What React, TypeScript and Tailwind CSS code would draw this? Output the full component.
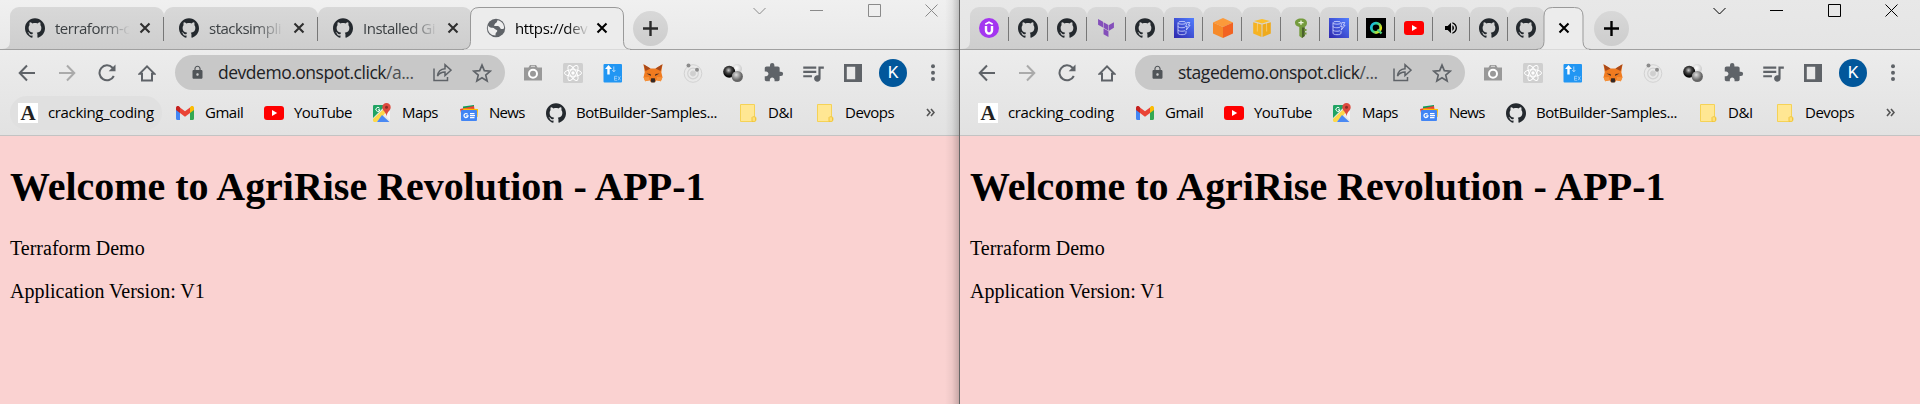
import type { ReactNode } from "react";
import { SiGithub, SiTerraform } from "react-icons/si";
import { MdExtension, MdLock, MdQueueMusic, MdVolumeUp } from "react-icons/md";

const Github = () => <SiGithub className="size-5 text-[#24292e]" />;

const Globe = () => (
  <svg className="relative mx-px size-5" viewBox="0 0 20 20">
    <circle cx="10" cy="10" r="9.200" fill="#5f6368" />
    <path d="M2 7.500c1 1.500 2.500 2.300 4.500 2.300 2.200 0 2 1.700 3.700 2 1.500.3 1.300 1.600.3 2.400-1 .7-1 1.500-1 3.300C5 17.500 1.800 14 1.800 10z" fill="#eee" />
    <path d="M11.500 2.200c-.8 1.300-.3 2.300-1.700 2.800-1.300.5-.8 2-2 2.200 1.500 1.600 3.500.3 5.200 1.300 1.300.8.800 2 2.200 2.500 1 .3 2 0 2.900-.8.200-4-2.600-7.500-6.600-8z" fill="#eee" />
  </svg>
);

const Udemy = () => (
  <svg className="size-5" viewBox="0 0 20 20">
    <circle cx="10" cy="10" r="10" fill="#a435f0" />
    <path d="M6.3 6.3 10 4.2l3.7 2.1" fill="none" stroke="#fff" strokeWidth="1.7" />
    <path d="M7 8v4.6a3 3 0 0 0 6 0V8" fill="none" stroke="#fff" strokeWidth="2.4" />
  </svg>
);

const Dynamo = () => (
  <svg className="size-5" viewBox="0 0 20 20">
    <defs>
      <linearGradient id="dyn" x1="0" y1="1" x2="1" y2="0">
        <stop offset="0" stopColor="#2e27ad" />
        <stop offset="1" stopColor="#527fff" />
      </linearGradient>
    </defs>
    <rect width="20" height="20" fill="url(#dyn)" />
    <g fill="none" stroke="#d5dbff" strokeWidth="0.8">
      <ellipse cx="8" cy="4.800" rx="4" ry="1.400" />
      <path d="M4 5v10.200c0 2 8 2 8 0v-2.500M4 8.300c0 1.600 5 1.800 7 .9M4 11.800c0 1.600 5 1.800 7 .9" />
      <path d="m13.200 4.500-1.600 4h1.700l-1 3.500 3.800-4.800h-1.800l1.500-2.700z" />
    </g>
  </svg>
);

const OrangeCube = () => (
  <svg className="size-5" viewBox="0 0 20 20">
    <path d="M10 0 20 4.500 10 9 0 4.500z" fill="#fb9a3a" />
    <path d="M0 4.500 10 9v11L0 15.500z" fill="#f68a2a" />
    <path d="M20 4.500 10 9v11l10-4.500z" fill="#f26322" />
  </svg>
);

const YellowCube = () => (
  <svg className="size-5" viewBox="0 0 20 20">
    <path d="m10 1 8 2-8 2.400L2 3z" fill="#fbbf2d" />
    <path d="m1.200 4.200 8.300 2.400V19l-8.300-3.400z" fill="#f6b322" />
    <path d="m18.800 4.200-8.300 2.400V19l8.300-3.400z" fill="#efaa1c" />
    <path d="m5.500 4.500-.2 9M14.500 4.500l.2 9" stroke="#fbdc9a" strokeWidth=".6" />
  </svg>
);

const Key = () => (
  <svg className="size-5" viewBox="0 0 20 20">
    <path d="M10 0.500c4.200 0 6 1.800 6 4.500 0 2-1 3-2.300 4V18L11 20l-2.700-2V9C5.500 8.300 4 7 4 4.800 4 2.200 6.300.5 10 .5z" fill="#759c3e" />
    <path d="M11 9.500h2.700V18L11 20z" fill="#4b612c" />
    <path d="M13.500 11h2v2h-2zM13.500 14.500h2v2h-2z" fill="#759c3e" />
    <path d="M7.500 4h5v1.300h-5z M9.300 2.500h1.400v4.200H9.300z" fill="#eef5dd" />
  </svg>
);

const QRing = () => (
  <svg className="size-5" viewBox="0 0 20 20">
    <defs>
      <linearGradient id="ring" x1="0" y1="0" x2="1" y2="0.6">
        <stop offset="0" stopColor="#17b6f2" />
        <stop offset="0.5" stopColor="#2fcf9a" />
        <stop offset="1" stopColor="#e6e817" />
      </linearGradient>
    </defs>
    <rect width="20" height="20" />
    <circle cx="10" cy="9.800" r="4.700" fill="none" stroke="url(#ring)" strokeWidth="2.800" />
    <path d="m11.500 11.500 4 4" stroke="#4fd07f" strokeWidth="2.400" />
  </svg>
);

const Youtube = () => (
  <svg className="size-5" viewBox="0 0 20 20">
    <rect y="3" width="20" height="14" rx="3" fill="#f00" />
    <path d="m8 7 5.200 3L8 13z" fill="#fff" />
  </svg>
);

const Speaker = () => <MdVolumeUp className="size-4 text-black" />;

const Gmail = () => (
  <svg className="size-5" viewBox="0 0 20 20">
    <path d="M1 5v10.500C1 16.300 1.600 17 2.400 17H5V8z" fill="#4285f4" />
    <path d="M19 5v10.500c0 .8-.6 1.500-1.400 1.500H15V8z" fill="#34a853" />
    <path d="M5 4.500 10 8.300l5-3.800V10l-5 3.800L5 10z" fill="#ea4335" />
    <path d="M1 5c0-1.800 2-2.400 3.200-1.400L5 4.200V10L1 7z" fill="#c5221f" />
    <path d="M19 5c0-1.800-2-2.400-3.200-1.400l-.8.6V10l4-3z" fill="#fbbc04" />
  </svg>
);

const Maps = () => (
  <svg className="size-5" viewBox="0 0 20 20">
    <rect x="1" y="2" width="17" height="17" rx="1.500" fill="#e8e8e8" />
    <path d="M2 2h12L1 15V3.500C1 2.700 1.400 2 2 2z" fill="#1fa463" />
    <path d="M1 16 15 3l3 3L4.500 19H2.500C1.600 19 1 18.400 1 17.500z" fill="#fdd849" />
    <path d="m10 12 7.500 7H5z" fill="#4a89f3" />
    <path d="m12 11 6-3v9.500z" fill="#f5f5f5" />
    <path d="M14.500 0a4.200 4.200 0 0 1 4.200 4.200c0 3.600-3.700 4.300-4.200 9.300-.5-5-4.200-5.700-4.200-9.300A4.200 4.200 0 0 1 14.500 0z" fill="#dd4b3e" />
    <circle cx="14.500" cy="4.300" r="1.500" fill="#8a2d24" />
    <path d="M7.500 5.200a2 2 0 1 0 .4 1.600H6" fill="none" stroke="#fff" />
  </svg>
);

const News = () => (
  <svg className="size-5" viewBox="0 0 20 20">
    <path d="M4 3.500 15 2v7H4z" fill="#0c9d58" />
    <path d="m1 6 14-3 1 7H2z" fill="#ea4335" />
    <path d="m4 5.500 15 .5-.5 8H5z" fill="#fbbc04" />
    <rect x="2" y="7" width="16" height="11" rx="1" fill="#4285f4" />
    <path d="M8.600 11.300a2 2 0 1 0 .4 1.500H7.200" fill="none" stroke="#fff" strokeWidth="1.200" />
    <path d="M11 10.600h4.500M11 12.600h5M11 14.600h4.500" stroke="#fff" strokeWidth="1.100" />
  </svg>
);

const Folder = () => (
  <svg className="size-5" viewBox="0 0 20 20">
    <path d="M2.500 1.500h14v12l1.500 1v3l-1.500 1h-14z" fill="#ffe793" stroke="#f5d256" />
    <path d="M14 18.500v-4c0-1 3.500-1 3.500 0v3c0 1-1.500 1-3.500 1z" fill="#ffe078" stroke="#f0c63d" />
  </svg>
);

const LetterA = () => (
  <span className="flex size-5 items-center justify-center bg-white font-['Liberation_Serif',serif] text-[21px] leading-none font-bold text-[#222]">A</span>
);

const Close = ({ dim }: { dim?: boolean }) => (
  <svg className={dim ? "size-3 text-[#2e2e2e]" : "size-3 text-black"} viewBox="0 0 12 12">
    <path d="m1.500 1.500 9 9m0-9-9 9" stroke="currentColor" strokeWidth="2.100" />
  </svg>
);

const Sep = () => <span className="absolute top-2.5 right-0 h-6 w-px bg-[#777]" />;

const tabFill = "bg-linear-to-b from-[#d8d8d8] to-[#cecece]";

function WideTab({ title, last }: { title: string; last?: boolean }) {
  return (
    <div className={`relative flex h-[42px] w-[154px] shrink-0 items-center rounded-t-[9px] pl-[15px] ${tabFill}`}>
      <Github />
      <span className="ml-2.5 w-[75px] text-[15px] tracking-[-0.500px] whitespace-nowrap text-[#3c4043] [mask-image:linear-gradient(to_right,#000_60%,transparent)]">{title}</span>
      <span className="ml-[9px]"><Close dim /></span>
      {!last && <Sep />}
    </div>
  );
}

function SlimTab({ children, last }: { children: ReactNode; last?: boolean }) {
  return (
    <div className={`relative flex h-[42px] flex-1 items-center justify-center rounded-t-[9px] ${tabFill}`}>
      {children}
      {!last && <Sep />}
    </div>
  );
}

const NewTab = ({ className }: { className: string }) => (
  <span className={`mt-1 flex size-[35px] shrink-0 items-center justify-center rounded-full bg-linear-to-b from-[#d8d8d8] to-[#cdcdcd] ${className}`}>
    <svg className="size-[15px]" viewBox="0 0 15 15"><path d="M7.500 0v15M0 7.500h15" stroke="currentColor" strokeWidth="2.400" /></svg>
  </span>
);

const Controls = ({ className }: { className: string }) => (
  <div className={`-mt-[3px] mr-[22px] ml-auto flex gap-[44.500px] ${className}`}>
    {["m.500 4 6 6 6-6", "M0 6.500h13", "M.500.500h12v12H.500z", "m.500.500 12 12m0-12-12 12"].map((d) => (
      <svg key={d} className="size-[13px]" viewBox="0 0 13 13" fill="none" stroke="currentColor" strokeWidth="1"><path d={d} /></svg>
    ))}
  </div>
);

const stroke = { fill: "none", stroke: "currentColor", strokeWidth: 2 } as const;

const Cell = ({ children, className = "" }: { children: ReactNode; className?: string }) => (
  <span className={`flex w-10 shrink-0 items-center justify-center ${className}`}>{children}</span>
);

function Toolbar({ url }: { url: string }) {
  return (
    <div className="flex h-[35px] items-center pl-[7px] text-[#5f6368]">
      <Cell><svg className="size-[18px]" viewBox="0 0 18 18" {...stroke}><path d="M17 9H2M9 1.500 1.700 9 9 16.500" /></svg></Cell>
      <Cell className="text-[#aaa]"><svg className="size-[18px]" viewBox="0 0 18 18" {...stroke}><path d="M1 9h15M9 1.500 16.300 9 9 16.500" /></svg></Cell>
      <Cell><svg className="size-[18px]" viewBox="0 0 18 18" {...stroke}><path d="M15.800 12A7.500 7.500 0 1 1 14.500 3.700L16 5.500" /><path d="M17.500.500v6.800h-6.800z" fill="currentColor" stroke="none" /></svg></Cell>
      <Cell><svg className="size-[18px]" viewBox="0 0 18 18" {...stroke}><path d="M1.500 9.800H4V16.500h10V9.800h2.500L9 2.300z" /></svg></Cell>
      <div className="ml-2 flex h-[35px] w-[330px] shrink-0 items-center rounded-full bg-[#c8c8c8]">
        <MdLock className="ml-[15px] size-[15px] text-[#505458]" />
        <span className="ml-[13px] w-[202px] pb-px text-[17.500px] leading-6 tracking-[-0.480px] whitespace-nowrap text-[#4d5053]">
          <span className="text-[#202124]">{url.split("/")[0]}</span>/{url.split("/")[1]}
        </span>
        <svg className="ml-[13px] size-[19px]" viewBox="0 0 19 19" fill="none" stroke="currentColor" strokeWidth="1.500">
          <path d="M1 5.500V17.500h13.500V14" /><path d="M4.500 13C5 8.500 7.500 6 12 5.700V1.800L18 7.200l-6 5.300V9C8.500 9 6.500 10 4.500 13z" />
        </svg>
        <svg className="ml-5 size-5" viewBox="0 0 24 24" fill="none" stroke="currentColor" strokeWidth="2"><path d="m12 2.500 2.800 6.700 7.200.600-5.500 4.700 1.700 7L12 17.800l-6.200 3.700 1.700-7L2 9.800l7.200-.600z" /></svg>
      </div>
      <div className="ml-2 flex">
        <Cell>
          <svg className="size-5" viewBox="0 0 20 20"><path d="M1 4.500h4.500L7 2h6l1.500 2.500H19v13H1z" fill="#999" /><circle cx="10" cy="10.700" r="4" fill="#999" stroke="#fff" strokeWidth="2" /><path d="M8 3.300h4" stroke="#ddd" /></svg>
        </Cell>
        <Cell>
          <svg className="size-5" viewBox="0 0 20 20"><rect width="20" height="20" rx="1.500" fill="#cfcfcf" /><g fill="none" stroke="#fff" strokeWidth="1"><ellipse cx="10" cy="10" rx="8.500" ry="3.300" /><ellipse cx="10" cy="10" rx="8.500" ry="3.300" transform="rotate(60 10 10)" /><ellipse cx="10" cy="10" rx="8.500" ry="3.300" transform="rotate(120 10 10)" /></g><circle cx="10" cy="10" r="1.700" fill="#fff" /></svg>
        </Cell>
        <Cell>
          <svg className="size-5" viewBox="0 0 20 20"><rect x=".5" y="1" width="18.500" height="18.500" rx="1" fill="#2196f3" /><path d="M5.500 2 9 6H6.700v5.500H4.300V6H2z" fill="#fff" /><path d="M10.800 3.500v5M9.300 7l1.500 2 1.500-2" fill="none" stroke="#a6d4fa" /><path d="M14 13.300h-2.500v4H14M11.500 15.300H14M15 13.300l2.500 4M17.500 13.300l-2.500 4" fill="none" stroke="#b5dbfb" strokeWidth=".7" /></svg>
        </Cell>
        <Cell>
          <svg className="size-5" viewBox="0 0 20 20"><path d="m.5 1.300 7 4.200h5l7-4.200-1.200 8 1.200 5-1.700 4-4.300-1-1.500 2H8l-1.500-2-4.300 1-1.700-4 1.200-5z" fill="#f07b20" /><path d="m.5 1.300 7 4.200-5 2.500zM19.500 1.300l-7 4.200 5 2.500z" fill="#a8491a" /><path d="m3.500 10.500 4 .5L8 13zM16.500 10.500l-4 .5-.5 2z" fill="#3b2b28" /><path d="M8.200 15.300h3.600l.5 2.700-.800 1.500h-3L7.700 18z" fill="#322825" /><path d="M.500 14.300 6 14l.500 3.300-4.300 1zM19.500 14.300 14 14l-.500 3.300 4.300 1z" fill="#f59139" /></svg>
        </Cell>
        <Cell>
          <svg className="size-5" viewBox="0 0 20 20" fill="none" stroke="#d2d2d2"><circle cx="10" cy="10.500" r="8.800" /><circle cx="10" cy="10.500" r="5.300" strokeWidth="1.200" /><circle cx="10" cy="10.500" r="2.600" fill="#cfcfcf" /><g stroke="none" fill="#8b8b8b"><circle cx="5.500" cy="2.500" r="2" /><circle cx="14" cy="6.800" r="2" /></g></svg>
        </Cell>
        <Cell>
          <svg className="size-5" viewBox="0 0 20 20">
            <defs>
              <radialGradient id="blackBall" cx=".45" cy=".38"><stop offset="0" stopColor="#ccc" /><stop offset=".5" stopColor="#444" /><stop offset="1" stopColor="#080808" /></radialGradient>
              <radialGradient id="grayBall" cx=".4" cy=".35"><stop offset="0" stopColor="#ddd" /><stop offset="1" stopColor="#666" /></radialGradient>
              <radialGradient id="whiteBall" cx=".45" cy=".4"><stop offset="0" stopColor="#fff" /><stop offset="1" stopColor="#d0d0d0" /></radialGradient>
            </defs>
            <circle cx="14" cy="6" r="5" fill="url(#whiteBall)" /><circle cx="6.200" cy="8.700" r="6" fill="url(#blackBall)" /><circle cx="14.300" cy="13.500" r="5.600" fill="url(#grayBall)" />
          </svg>
        </Cell>
        <Cell><MdExtension className="size-[21px]" /></Cell>
        <Cell><MdQueueMusic className="size-[26px]" /></Cell>
        <Cell><svg className="size-[18px]" viewBox="0 0 18 18"><path fillRule="evenodd" d="M0 0h18v18H0zM2.800 2.800v12.400h8.400V2.800z" fill="currentColor" /></svg></Cell>
        <Cell><span className="flex size-7 items-center justify-center rounded-full bg-[#01579b] font-['Roboto',sans-serif] text-[17px] text-white">K</span></Cell>
        <Cell><svg className="size-[18px]" viewBox="0 0 18 18" fill="currentColor"><circle cx="9" cy="2.300" r="2" /><circle cx="9" cy="8.700" r="2" /><circle cx="9" cy="15" r="2" /></svg></Cell>
      </div>
    </div>
  );
}

const bookmarks: { label: string; icon: ReactNode; size: string; tracking: string }[] = [
  { label: "cracking_coding", icon: <LetterA />, size: "w-[157px]", tracking: "tracking-[-0.350px]" },
  { label: "Gmail", icon: <Gmail />, size: "w-[89px]", tracking: "tracking-[-0.500px]" },
  { label: "YouTube", icon: <Youtube />, size: "w-[108px]", tracking: "tracking-[-0.550px]" },
  { label: "Maps", icon: <Maps />, size: "w-[87px]", tracking: "tracking-[-0.600px]" },
  { label: "News", icon: <News />, size: "w-[87px]", tracking: "tracking-[-0.700px]" },
  { label: "BotBuilder-Samples...", icon: <Github />, size: "w-[192px]", tracking: "tracking-[-0.420px]" },
  { label: "D&I", icon: <Folder />, size: "w-[77px]", tracking: "tracking-[-0.350px]" },
  { label: "Devops", icon: <Folder />, size: "w-[111px]", tracking: "tracking-[-0.500px]" },
];

function Bookmarks({ hovered }: { hovered?: boolean }) {
  return (
    <div className="mt-[6px] flex h-[34px] items-center pl-2.5 text-[15px] text-black">
      {bookmarks.map((b, i) => (
        <div key={b.label} className={`shrink-0 ${b.size}`}>
          <div className={`flex h-[34px] items-center gap-2.5 rounded-full pl-2 whitespace-nowrap ${hovered && i === 0 ? "w-[152px] bg-[#e0e0e0]" : ""}`}>
            {b.icon}
            <span className={`pb-0.5 ${b.tracking}`}>{b.label}</span>
          </div>
        </div>
      ))}
      <svg className="mb-0.5 ml-2 size-[9px]" viewBox="0 0 9 9" fill="none" stroke="#555" strokeWidth="1.600"><path d="M1 1l3 3.500L1 8M5 1l3 3.500L5 8" /></svg>
    </div>
  );
}

const Page = () => (
  <main className="flex-1 bg-[#fad2d1] pl-2.5 font-['Liberation_Serif',serif] text-[20px] leading-[23px] text-black">
    <h1 className="pt-7 text-[40px] leading-[46px] font-bold tracking-[-0.030px] whitespace-nowrap">Welcome to AgriRise Revolution - APP-1</h1>
    <p className="mt-[27px]">Terraform Demo</p>
    <p className="mt-5">Application Version: V1</p>
  </main>
);

function Chrome({ tabs, url, hovered, strip }: { tabs: ReactNode; url: string; hovered?: boolean; strip: string }) {
  return (
    <section className="flex h-[404px] w-[960px] shrink-0 flex-col overflow-hidden">
      <div className={`flex h-[50px] items-start border-b border-[#a0a0a0] pt-[7px] ${strip}`}>{tabs}</div>
      <div className="h-[86px] border-b border-[#c3c3c3] bg-linear-to-b from-[#ececec] to-[#e2e2e2] pt-[5px]">
        <Toolbar url={url} />
        <Bookmarks hovered={hovered} />
      </div>
      <Page />
    </section>
  );
}

const Flare = () => (
  <svg className="h-[42px] w-2.5 shrink-0" viewBox="0 0 10 42"><path d="M2 42q8 0 8-8v8z" fill="#cecece" /></svg>
);

export default function App() {
  return (
    <div className="relative flex h-[404px] w-[1920px] overflow-hidden font-['Open_Sans',sans-serif]">
      <Chrome
        hovered
        strip="bg-linear-to-b from-[#f0f0f0] to-[#e9e9e9]"
        url="devdemo.onspot.click/a..."
        tabs={
          <>
            <Flare />
            <WideTab title="terraform-c" />
            <WideTab title="stacksimpli" />
            <WideTab title="Installed Gi" last />
            <div className="relative z-10 flex h-[43px] w-[152px] shrink-0 items-center pb-px pl-[13px]">
              <svg className="absolute top-0 -left-[10px] h-[43px] w-[170px]" viewBox="0 0 170 43"><path d="M0 42.500q8.500 0 8.500-8V9q0-8.500 8.500-8.500h136Q161.500 .5 161.500 9v25.500q0 8 8 8" fill="#ececec" stroke="#999" /><path d="M2 43h166" stroke="#ececec" /></svg>
              <Globe />
              <span className="relative ml-2 w-[74px] text-[15px] tracking-[-0.350px] whitespace-nowrap text-black [mask-image:linear-gradient(to_right,#000_70%,transparent)]">https://dev</span>
              <span className="relative ml-[7px]"><Close /></span>
            </div>
            <NewTab className="ml-[9px] text-[#2a2a2a]" />
            <Controls className="text-[#8a8a8a]" />
          </>
        }
      />
      <Chrome
        strip="bg-linear-to-b from-[#e8e8e8] to-[#e5e5e5]"
        url="stagedemo.onspot.click/..."
        tabs={
          <>
            <Flare />
            <div className="flex w-[350px] shrink-0">
              <SlimTab><Udemy /></SlimTab>
              <SlimTab><Github /></SlimTab>
              <SlimTab><Github /></SlimTab>
              <SlimTab><SiTerraform className="size-[18px] text-[#844fba]" /></SlimTab>
              <SlimTab><Github /></SlimTab>
              <SlimTab><Dynamo /></SlimTab>
              <SlimTab><OrangeCube /></SlimTab>
              <SlimTab><YellowCube /></SlimTab>
              <SlimTab><Key /></SlimTab>
            </div>
            <div className="flex w-[225px] shrink-0">
              <SlimTab><Dynamo /></SlimTab>
              <SlimTab><QRing /></SlimTab>
              <SlimTab><Youtube /></SlimTab>
              <SlimTab><Speaker /></SlimTab>
              <SlimTab><Github /></SlimTab>
              <SlimTab last><Github /></SlimTab>
            </div>
            <div className="relative z-10 flex h-[43px] w-[38px] shrink-0 items-center justify-center pb-px">
              <svg className="absolute top-0 -left-[9px] h-[43px] w-[56px]" viewBox="0 0 56 43"><path d="M0 42.500q8 0 8-8V9Q8 .5 16.500 .5h22Q47 .5 47 9v25.500q0 8 8 8" fill="#ececec" stroke="#999" /><path d="M2 43h51" stroke="#ececec" /></svg>
              <span className="relative"><Close /></span>
            </div>
            <NewTab className="ml-[11px] text-black" />
            <Controls className="text-black" />
          </>
        }
      />
      <div className="absolute top-0 left-[945px] h-[404px] w-[15px] border-r border-[#666] bg-linear-to-r from-transparent via-black/5 to-black/20" />
    </div>
  );
}
